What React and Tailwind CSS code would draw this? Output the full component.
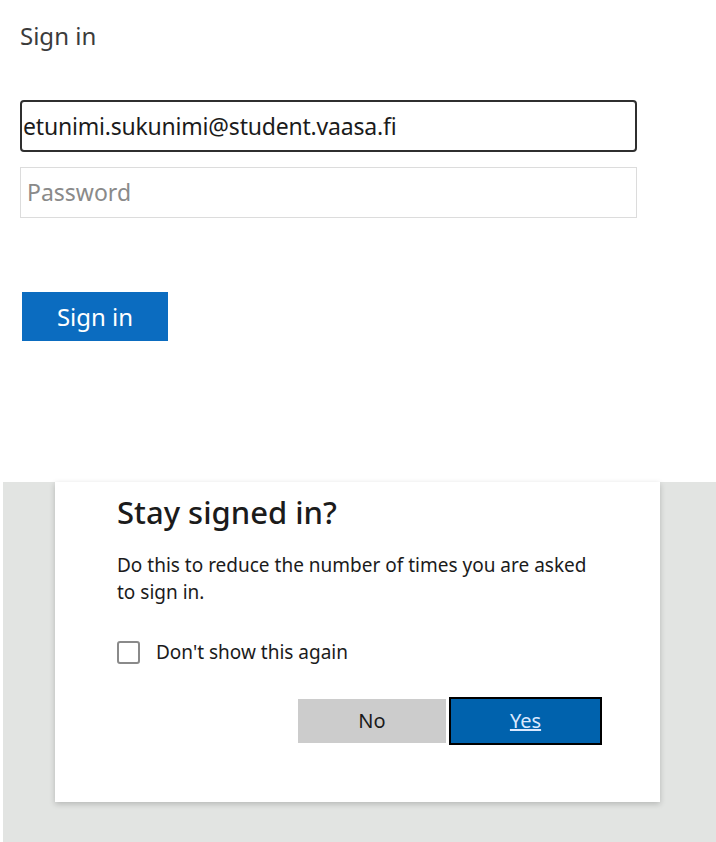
export default function App() {
  return (
    <div
      className="w-[716px] h-[842px] bg-white flex flex-col overflow-hidden"
      style={{ fontFamily: '"Noto Sans", "Open Sans", sans-serif' }}
    >
      <div className="h-[482px] px-5 pt-[20px]">
        <h1 className="text-[24px] leading-[32px] text-[#3b3b3b]">Sign in</h1>
        <div className="mt-[48px] w-[617px] h-[52px] border-2 border-[#2f2f2f] rounded-[4px] flex items-center px-[1px] text-[23px] tracking-[-0.2px] text-[#1b1b1b]">
          etunimi.sukunimi@student.vaasa.fi
        </div>
        <div className="mt-[15px] w-[617px] h-[51px] border border-[#dcdcdc] flex items-center px-[6px] text-[23px] text-[#8a8a8a]">
          Password
        </div>
        <button className="mt-[74px] ml-[2px] w-[146px] h-[49px] bg-[#0b6cc0] text-white text-[24px] flex items-center justify-center">
          Sign in
        </button>
      </div>
      <div className="flex-1 bg-[#e2e4e2] pl-[52px] pr-[56px] pb-[40px] border-l-[3px] border-white">
        <div className="bg-white h-full shadow-[0_2px_6px_rgba(0,0,0,0.2)] pl-[62px] pr-[58px] pt-[9px]">
          <h2 className="text-[31px] leading-[42px] font-medium text-[#1b1b1b]">
            Stay signed in?
          </h2>
          <p className="mt-[19px] max-w-[482px] text-[19px] leading-[27px] text-[#1b1b1b]">
            Do this to reduce the number of times you are asked to sign in.
          </p>
          <label className="mt-[32px] flex items-center gap-[16px]">
            <span className="w-[23px] h-[23px] border-2 border-[#8a8a8a] rounded-[3px] bg-white"></span>
            <span className="text-[19px] text-[#1b1b1b]">Don't show this again</span>
          </label>
          <div className="mt-[30px] flex justify-end gap-[3px]">
            <button className="w-[148px] h-[44px] mt-[2px] bg-[#cccccc] text-[#1b1b1b] text-[20px]">
              No
            </button>
            <button className="w-[153px] h-[48px] bg-[#0062ad] border-2 border-black text-[#dbe9ff] text-[20px] underline">
              Yes
            </button>
          </div>
        </div>
      </div>
    </div>
  );
}
